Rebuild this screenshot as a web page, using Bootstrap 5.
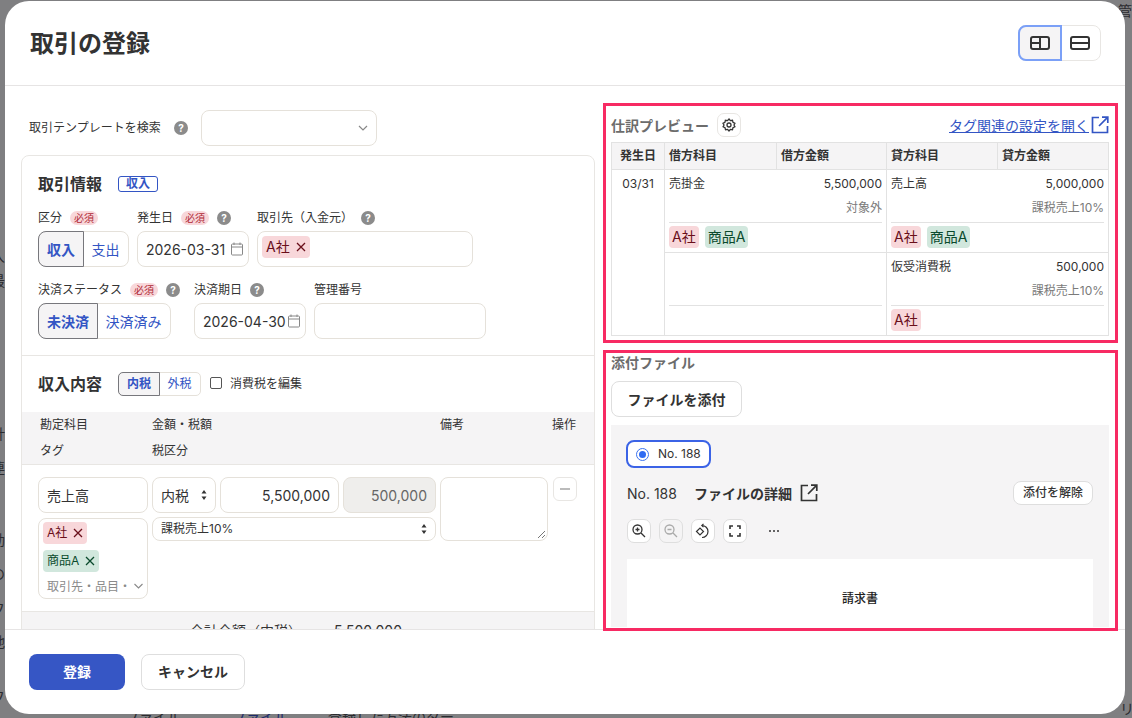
<!DOCTYPE html>
<html lang="ja">
<head>
<meta charset="UTF-8">
<title>取引の登録</title>
<link href="https://cdn.jsdelivr.net/npm/bootstrap@5.3.0/dist/css/bootstrap.min.css" rel="stylesheet">
<style>
html,body{height:100%;overflow:hidden}
body{background:#7f7f81;font-family:Inter,"Noto Sans CJK JP",sans-serif;color:#333;font-size:12px;line-height:1.5;position:relative}
.under{position:absolute;color:#2b2b2f;font-size:14px;line-height:18px;white-space:nowrap}
.shell{width:1120px;height:713px;margin:1px 0 0 5px;background:#fff;border-radius:24px;overflow:hidden;display:flex;flex-direction:column;position:relative;z-index:3}
.shell-head{height:85px;flex:none;border-bottom:1px solid #e6e4e4;padding:0 24px;display:flex;align-items:center;justify-content:space-between}
.shell-head h1{font-size:24px;font-weight:700;margin:2px 0 0 1px;color:#333}
.shell-main{height:543px;flex:none;display:flex}
.shell-foot{height:85px;flex:none;border-top:1px solid #e6e4e4;padding:24px;display:flex;gap:16px}
.left-pane{width:598px;flex:none;height:100%;overflow:hidden;padding:24px 0 0 16px}
.right-pane{flex:1;padding:17px 0 0 0;position:relative}
.tmpl-row{display:flex;align-items:center;height:36px;padding-left:8px;margin-bottom:9px}
.tmpl-row span.lbl{width:132px}
.help{display:inline-block;width:14px;height:14px;flex:none}
.field{border:1px solid #e5e1da;border-radius:8px;background:#fff;height:36px;font-size:14px;display:flex;align-items:center;padding:0 8px;color:#333;white-space:nowrap}
.date-field{padding:0 5px 0 8px}
.form-sheet{width:574px;border:1px solid #e8e6e3;border-radius:8px 8px 0 0;height:600px}
.sec-a{height:200px;border-bottom:1px solid #e8e6e3;padding:16px 16px 0}
.sec-title{font-size:16px;font-weight:700;line-height:24px;color:#333}
.out-tag{border:1px solid #3355c4;color:#3355c4;border-radius:3px;font-size:12px;font-weight:700;line-height:14px;padding:0 7px;margin-left:16px}
.f-label{height:20px;display:flex;align-items:center;gap:8px;white-space:nowrap}
.must{background:#f8d7da;color:#b02a37;border-radius:8px;font-size:10px;line-height:14px;padding:0 4px}
.seg{display:flex;height:36px;border:1px solid #e5e1da;border-radius:8px;font-size:14px}
.seg span{display:flex;align-items:center;justify-content:center;color:#3355c4;height:100%}
.seg .on{background:#f5f4f5;font-weight:700;border:1px solid #77777c;border-radius:8px 0 0 8px;margin:-1px;height:36px}
.pick{background:#f8d7da;color:#6a0f1a;border-radius:4px;font-size:13px;line-height:18px;padding:2px 4px;display:inline-flex;align-items:center;gap:6px;white-space:nowrap}
.pick.grn{background:#d1e7dd;color:#0a4a2c}
.sec-b-head{height:56px;display:flex;align-items:center;padding:0 16px 0}
.seg.thin{height:24px;border-radius:5px;font-size:12px;margin-left:16px}
.seg.thin .on{height:24px;border-radius:5px 0 0 5px}
.entry-head{background:#f5f4f5;border-bottom:1px solid #e8e6e3;height:53px;padding:0 16px;display:grid;grid-template-columns:110px 284px 108px 24px;column-gap:4px;grid-auto-rows:26px;align-items:center}
.entry-head span{padding-left:2px}
.entry-head span:nth-child(n+2){padding-left:0}
.entry-row{display:grid;grid-template-columns:110px 284px 108px 24px;column-gap:4px;padding:12px 16px 12px;border-bottom:1px solid #e8e6e3;height:147px;align-items:start}
.amt-line{display:flex;gap:4px}
.small-sel{height:24px;font-size:12px;margin-top:4px;justify-content:space-between}
.tag-box{border:1px solid #e5e1da;border-radius:8px;height:81px;margin-top:5px;padding:3px 4px 4px;display:flex;flex-direction:column;gap:6px;align-items:flex-start}
.tag-box .hint{color:#8a8a8a;font-size:12px;line-height:14px;padding-left:4px;width:100%;display:flex;justify-content:space-between;white-space:nowrap;margin-top:2px}
.memo-box{height:64px;border:1px solid #e5e1da;border-radius:8px;position:relative}
.memo-box svg{position:absolute;right:1px;bottom:1px}
.minus{width:24px;height:24px;border:1px solid #e8e6e3;border-radius:6px;display:flex;align-items:center;justify-content:center;margin-left:1px}
.minus i{width:10px;height:2px;background:#bbb;display:block}
.sum-strip{background:#f5f4f5;height:40px;display:flex;padding:8px 0 0 168px;font-size:14px;gap:32px}
.pink-a,.pink-b{border:3px solid #f72a63;width:515px;padding:0 6px 0 5px;background:#fff;position:relative;z-index:2}
.pink-a{height:240px;margin-bottom:7px;padding-top:5px}
.pink-b{height:281px}
.pv-head{display:flex;align-items:center;height:28px;margin-bottom:3px}
.pv-title{font-size:14px;font-weight:700;color:#6c6c6c}
.gear{width:24px;height:24px;border:1px solid #e8e6e3;border-radius:7px;margin-left:8px;display:flex;align-items:center;justify-content:center}
.pv-link{margin-left:auto;font-size:14px;color:#3355c4;display:flex;align-items:center;gap:2px}
.pv-link span{text-decoration:underline}
.jt{width:497px;table-layout:fixed;border-collapse:collapse;border:1px solid #e2e2e2;margin:0}
.jt th{background:#f5f4f5;font-weight:700;height:27px;padding:0 4px;border:1px solid #e2e2e2;color:#333}
.jt td{border:1px solid #e2e2e2;vertical-align:top;padding:0 4px;height:83px}
.jt td.dt{text-align:center;padding-top:5px;font-size:12px}
.ln-a{display:flex;justify-content:space-between;line-height:18px;padding-top:5px}
.ln-b{color:#7a7a7a;text-align:right;line-height:18px;padding-top:6px;height:30px;border-bottom:1px solid #e2e2e2;margin-bottom:3px}
.chips{display:flex;gap:6px;height:23px}
.chips .pick{font-size:14px;line-height:18px;height:22px;padding:2px 3px}
.att-title{font-size:14px;font-weight:700;color:#6c6c6c;line-height:20px;padding-top:0}
.plain-btn{border:1px solid #dedede;border-radius:8px;background:#fff;font-weight:700;color:#333;display:flex;align-items:center;justify-content:center}
.att-btn{width:131px;height:36px;font-size:14px;margin:8px 0}
.att-panel{background:#f5f4f5;height:202px;width:498px;padding:15px 16px 0;overflow:hidden}
.no-pill{width:85px;height:28px;border:2px solid #3b63e6;border-radius:8px;background:#fff;display:flex;align-items:center;padding-left:8px;gap:9px;margin-bottom:13px;margin-left:-1px}
.radio-dot{width:13px;height:13px;border-radius:50%;border:1px solid #3b73f0;position:relative;display:block}
.radio-dot::after{content:"";position:absolute;inset:2px;border-radius:50%;background:#2f6bf2}
.file-row{display:flex;align-items:center;height:24px;font-size:14px;margin-bottom:14px}
.file-row b{margin-left:17px;font-size:14px}
.off-btn{margin-left:auto;width:80px;height:24px;font-size:12px;border-radius:8px;font-weight:500}
.tool-row{display:flex;align-items:center;height:24px;gap:8px;margin-bottom:16px}
.tool-btn{width:24px;height:24px;border:1px solid #dedede;border-radius:7px;background:#fff;display:flex;align-items:center;justify-content:center}
.tool-btn.off{background:#f5f4f5}
.dots{display:flex;gap:2px;margin-left:14px}
.dots i{width:2px;height:2px;border-radius:50%;background:#333;display:block}
.paper{background:#fff;height:90px;text-align:center;padding-top:31px;font-weight:500;color:#222}
.main-btn{width:96px;height:36px;background:#3656c5;border-radius:8px;color:#fff;font-size:14px;font-weight:700;display:flex;align-items:center;justify-content:center;border:0;padding-bottom:2px}
.cancel-btn{width:104px;height:36px;font-size:14px;padding-bottom:2px}
.view-seg{display:flex;width:83px;height:36px;border:1px solid #e8e6e3;border-radius:8px}
.view-seg span{flex:1;display:flex;align-items:center;justify-content:center}
.view-seg .on{background:#f5f4f5;border:2px solid #7ba0f7;border-radius:8px 0 0 8px;margin:-1px}
.check-box{width:12px;height:12px;border:1px solid #555;border-radius:2px;margin:0 8px 0 9px;background:#fff}
</style>
</head>
<body>
<!-- what shows through behind the dialog -->
<div aria-hidden="true">
  <span class="under" style="left:-9px;top:247px">入</span>
  <span class="under" style="left:-9px;top:272px">最</span>
  <span class="under" style="left:-9px;top:425px">計</span>
  <span class="under" style="left:-9px;top:459px">連</span>
  <span class="under" style="left:-9px;top:531px">効</span>
  <span class="under" style="left:-9px;top:565px">の</span>
  <span class="under" style="left:-9px;top:600px">フ</span>
  <span class="under" style="left:-9px;top:633px">地</span>
  <span class="under" style="left:-9px;top:688px">フ</span>
  <span class="under" style="left:1118px;top:2px">管</span>
  <span class="under" style="left:1120px;top:700px">リ</span>
  <span class="under" style="left:328px;top:708px">登録した方法のター</span>
  <span class="under" style="left:232px;top:708px;color:#1d2a6b">ファイル</span>
  <span class="under" style="left:125px;top:708px">ファイル</span>
</div>

<div class="shell">
  <div class="shell-head">
    <h1>取引の登録</h1>
    <div class="view-seg">
      <span class="on"><svg width="22" height="16" viewBox="0 0 22 16" fill="none" stroke="#333" stroke-width="2"><rect x="2" y="2" width="18" height="12" rx="2"/><path d="M11 2v12M2 8h9"/></svg></span>
      <span><svg width="22" height="16" viewBox="0 0 22 16" fill="none" stroke="#333" stroke-width="2"><rect x="2" y="2" width="18" height="12" rx="2"/><path d="M2 8h18"/></svg></span>
    </div>
  </div>

  <div class="shell-main">
    <div class="left-pane">
      <div class="tmpl-row">
        <span class="lbl">取引テンプレートを検索</span>
        <svg class="help" style="margin-left:13px" viewBox="0 0 14 14"><circle cx="7" cy="7" r="7" fill="#8b8b8b"/><text x="7" y="10.5" text-anchor="middle" font-size="10" font-weight="700" fill="#fff">?</text></svg>
        <div class="field justify-content-end" style="width:176px;margin-left:13px"><svg width="10" height="6" viewBox="0 0 10 6" fill="none" stroke="#888" stroke-width="1.2"><path d="M1 1l4 4 4-4"/></svg></div>
      </div>

      <div class="form-sheet">
        <div class="sec-a">
          <div class="d-flex align-items-center" style="margin-bottom:5px"><span class="sec-title">取引情報</span><span class="out-tag">収入</span></div>
          <div class="d-flex" style="gap:8px">
            <div style="width:91px">
              <div class="f-label" style="margin-top:7px"><span>区分</span><span class="must">必須</span></div>
              <div class="seg" style="margin-top:3px"><span class="on" style="width:46px">収入</span><span style="width:45px">支出</span></div>
            </div>
            <div style="width:112px">
              <div class="f-label" style="margin-top:7px"><span>発生日</span><span class="must">必須</span><svg class="help" viewBox="0 0 14 14"><circle cx="7" cy="7" r="7" fill="#8b8b8b"/><text x="7" y="10.5" text-anchor="middle" font-size="10" font-weight="700" fill="#fff">?</text></svg></div>
              <div class="field date-field justify-content-between" style="margin-top:3px"><span>2026-03-31</span><svg width="12" height="14" viewBox="0 0 12 14" fill="none" stroke="#888"><rect x=".5" y="2" width="11" height="11" rx="1"/><path d="M.5 5h11M3 .5V3M9 .5V3"/></svg></div>
            </div>
            <div style="width:216px">
              <div class="f-label" style="margin-top:7px"><span>取引先（入金元）</span><svg class="help" viewBox="0 0 14 14"><circle cx="7" cy="7" r="7" fill="#8b8b8b"/><text x="7" y="10.5" text-anchor="middle" font-size="10" font-weight="700" fill="#fff">?</text></svg></div>
              <div class="field align-items-start" style="padding:4px;margin-top:3px"><span class="pick" style="font-size:14px">A社 <svg width="10" height="10" viewBox="0 0 10 10" stroke="currentColor" stroke-width="1.3"><path d="M1 1l8 8M9 1l-8 8"/></svg></span></div>
            </div>
          </div>
          <div class="d-flex" style="margin-top:13px">
            <div style="width:133px">
              <div class="f-label"><span>決済ステータス</span><span class="must">必須</span><svg class="help" viewBox="0 0 14 14"><circle cx="7" cy="7" r="7" fill="#8b8b8b"/><text x="7" y="10.5" text-anchor="middle" font-size="10" font-weight="700" fill="#fff">?</text></svg></div>
              <div class="seg" style="margin-top:3px"><span class="on" style="width:60px">未決済</span><span style="width:73px">決済済み</span></div>
            </div>
            <div style="width:112px;margin-left:23px">
              <div class="f-label"><span>決済期日</span><svg class="help" viewBox="0 0 14 14"><circle cx="7" cy="7" r="7" fill="#8b8b8b"/><text x="7" y="10.5" text-anchor="middle" font-size="10" font-weight="700" fill="#fff">?</text></svg></div>
              <div class="field date-field justify-content-between" style="margin-top:3px"><span>2026-04-30</span><svg width="12" height="14" viewBox="0 0 12 14" fill="none" stroke="#888"><rect x=".5" y="2" width="11" height="11" rx="1"/><path d="M.5 5h11M3 .5V3M9 .5V3"/></svg></div>
            </div>
            <div style="width:172px;margin-left:8px">
              <div class="f-label"><span>管理番号</span></div>
              <div class="field" style="margin-top:3px"></div>
            </div>
          </div>
        </div>

        <div class="sec-b-head">
          <span class="sec-title" style="margin-top:-1px">収入内容</span>
          <div class="seg thin"><span class="on" style="width:42px">内税</span><span style="width:41px">外税</span></div>
          <span class="check-box" style="margin-top:-3px"></span><span style="margin-top:-1px">消費税を編集</span>
        </div>
        <div class="entry-head">
          <span>勘定科目</span><span>金額・税額</span><span>備考</span><span>操作</span>
          <span style="padding-left:2px">タグ</span><span>税区分</span>
        </div>
        <div class="entry-row">
          <div>
            <div class="field">売上高</div>
            <div class="tag-box">
              <span class="pick" style="font-size:12px">A社 <svg width="10" height="10" viewBox="0 0 10 10" stroke="currentColor" stroke-width="1.3"><path d="M1 1l8 8M9 1l-8 8"/></svg></span>
              <span class="pick grn" style="font-size:12px">商品A <svg width="10" height="10" viewBox="0 0 10 10" stroke="currentColor" stroke-width="1.3"><path d="M1 1l8 8M9 1l-8 8"/></svg></span>
              <span class="hint"><span>取引先・品目・</span><svg width="9" height="12" viewBox="0 0 9 12" fill="none" stroke="#888" stroke-width="1.1"><path d="M.5 4l4 4 4-4"/></svg></span>
            </div>
          </div>
          <div>
            <div class="amt-line">
              <div class="field justify-content-between" style="width:64px"><span>内税</span><svg width="6" height="10" viewBox="0 0 6 10" fill="#333"><path d="M3 0l2.5 3.5h-5zM3 10L.5 6.5h5z"/></svg></div>
              <div class="field justify-content-end" style="width:119px">5,500,000</div>
              <div class="field justify-content-end" style="width:93px;background:#efeeec;color:#666">500,000</div>
            </div>
            <div class="field small-sel"><span>課税売上10%</span><svg width="6" height="10" viewBox="0 0 6 10" fill="#333"><path d="M3 0l2.5 3.5h-5zM3 10L.5 6.5h5z"/></svg></div>
          </div>
          <div class="memo-box"><svg width="10" height="10" viewBox="0 0 10 10" stroke="#777"><path d="M9 2L2 9M9 6L6 9"/></svg></div>
          <div class="minus"><i></i></div>
        </div>
        <div class="sum-strip"><span>合計金額（内税）</span><span>5,500,000</span></div>
      </div>
    </div>

    <div class="right-pane">
      <div class="pink-a">
        <div class="pv-head">
          <span class="pv-title">仕訳プレビュー</span>
          <span class="gear"><svg width="14" height="14" viewBox="0 0 14 14" fill="none" stroke="#333" stroke-width="1.3"><path d="M7 1l1.4 1.6 2.1-.3.5 2 1.9 1-.9 1.7.9 1.7-1.9 1-.5 2-2.1-.3L7 13l-1.4-1.6-2.1.3-.5-2-1.9-1 .9-1.7L1 5.3l1.9-1 .5-2 2.1.3z"/><circle cx="7" cy="7" r="2"/></svg></span>
          <span class="pv-link"><span>タグ関連の設定を開く</span><svg width="18" height="18" viewBox="0 0 18 18" fill="none" stroke="#3355c4" stroke-width="1.7"><path d="M8 1.500H1.500v15h15V10M11 1.200h5.800V7M16.800 1.200L8 10"/></svg></span>
        </div>
        <table class="jt">
          <colgroup><col style="width:53px"><col style="width:112px"><col style="width:110px"><col style="width:111px"><col style="width:111px"></colgroup>
          <thead><tr><th class="text-center">発生日</th><th>借方科目</th><th>借方金額</th><th>貸方科目</th><th>貸方金額</th></tr></thead>
          <tbody>
            <tr>
              <td class="dt" rowspan="2">03/31</td>
              <td colspan="2"><div class="ln-a"><span>売掛金</span><span>5,500,000</span></div><div class="ln-b">対象外</div><div class="chips"><span class="pick">A社</span><span class="pick grn">商品A</span></div></td>
              <td colspan="2"><div class="ln-a"><span>売上高</span><span>5,000,000</span></div><div class="ln-b">課税売上10%</div><div class="chips"><span class="pick">A社</span><span class="pick grn">商品A</span></div></td>
            </tr>
            <tr>
              <td colspan="2"><div class="ln-a"><span>&nbsp;</span></div><div class="ln-b">&nbsp;</div></td>
              <td colspan="2"><div class="ln-a"><span>仮受消費税</span><span>500,000</span></div><div class="ln-b">課税売上10%</div><div class="chips"><span class="pick">A社</span></div></td>
            </tr>
          </tbody>
        </table>
      </div>

      <div class="pink-b">
        <div class="att-title">添付ファイル</div>
        <div class="plain-btn att-btn">ファイルを添付</div>
        <div class="att-panel">
          <div class="no-pill"><span class="radio-dot"></span><span>No. 188</span></div>
          <div class="file-row">
            <span>No. 188</span><b>ファイルの詳細</b>
            <svg class="ms-2" width="18" height="18" viewBox="0 0 18 18" fill="none" stroke="#333" stroke-width="1.7"><path d="M8 1.500H1.500v15h15V10M11 1.200h5.800V7M16.800 1.200L8 10"/></svg>
            <span class="plain-btn off-btn">添付を解除</span>
          </div>
          <div class="tool-row">
            <span class="tool-btn"><svg width="14" height="14" viewBox="0 0 14 14" fill="none" stroke="#333" stroke-width="1.3"><circle cx="5.500" cy="5.500" r="4.500"/><path d="M9 9l4 4M3.500 5.500h4M5.500 3.500v4"/></svg></span>
            <span class="tool-btn off"><svg width="14" height="14" viewBox="0 0 14 14" fill="none" stroke="#aaa" stroke-width="1.3"><circle cx="5.500" cy="5.500" r="4.500"/><path d="M9 9l4 4M3.500 5.500h4"/></svg></span>
            <span class="tool-btn"><svg width="16" height="16" viewBox="0 0 16 16" fill="none" stroke="#333" stroke-width="1.200"><path d="M1.500 8.500L5 5l3.500 3.500L5 12z"/><path d="M7 2.500a6 6 0 1 1 0 12"/><path d="M8.500 .8L6.800 2.500l1.700 1.700"/></svg></span>
            <span class="tool-btn"><svg width="12" height="12" viewBox="0 0 12 12" fill="none" stroke="#333" stroke-width="1.600"><path d="M1 4V1h3M8 1h3v3M11 8v3H8M4 11H1V8"/></svg></span>
            <span class="dots"><i></i><i></i><i></i></span>
          </div>
          <div class="paper">請求書</div>
        </div>
      </div>
    </div>
  </div>

  <div class="shell-foot">
    <button class="main-btn" type="button">登録</button>
    <div class="plain-btn cancel-btn">キャンセル</div>
  </div>
</div>
</body>
</html>
